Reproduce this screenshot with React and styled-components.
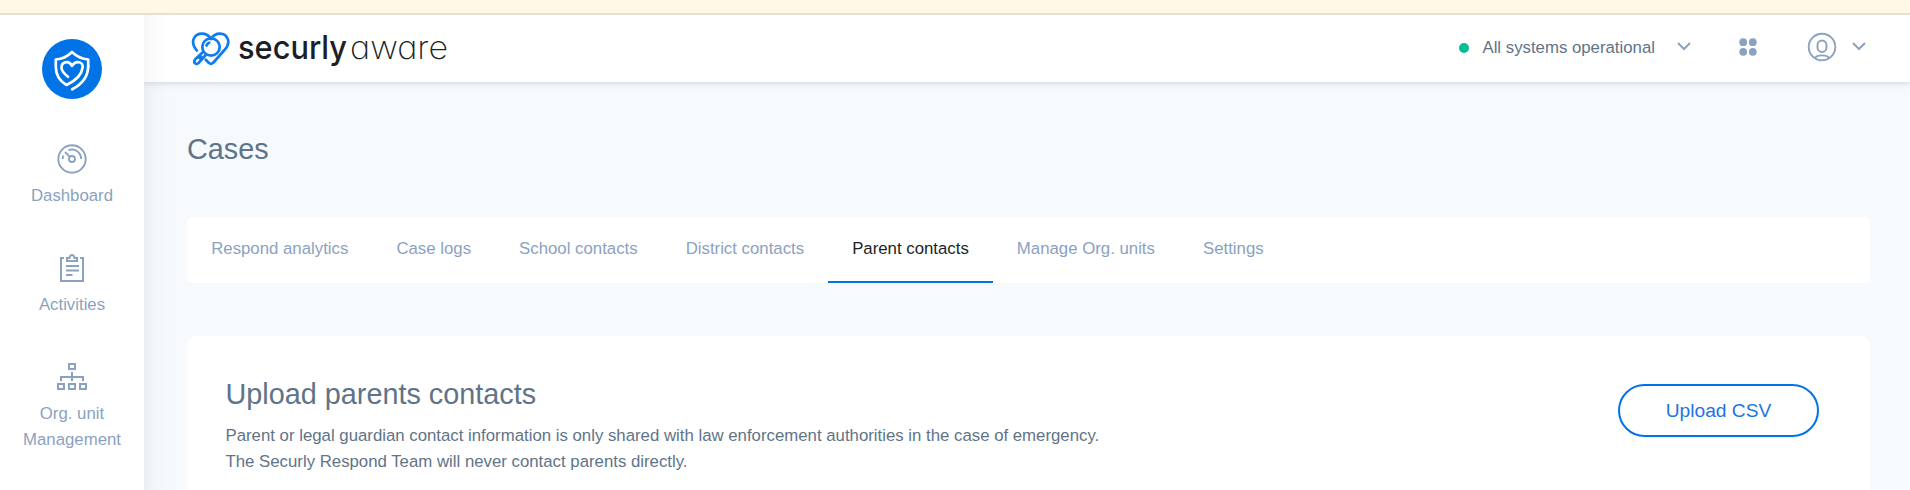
import React from "react";
import styled, { createGlobalStyle } from "styled-components";

const Global = createGlobalStyle`
  * { box-sizing: border-box; }
  html, body { margin: 0; height: 490px; overflow: hidden; }
  body { font-family: "Liberation Sans", Arial, sans-serif; font-size: 16.8px; color: #5f7488; background: #f6fafd; }
`;

const Page = styled.div`
  height: 490px;
  display: flex;
  flex-direction: column;
  overflow: hidden;
`;
const Notice = styled.div`
  flex: none;
  height: 15px;
  background: #fff7e8;
  border-bottom: 2px solid #e5e1cb;
`;
const Shell = styled.div`
  flex: 1;
  min-height: 0;
  display: flex;
`;
const Sidebar = styled.nav`
  flex: none;
  width: 144px;
  background: #fff;
  display: flex;
  flex-direction: column;
  align-items: center;
  padding-top: 24px;
`;
const Brand = styled.div`
  width: 60px;
  height: 60px;
  margin-bottom: 45px;
  border-radius: 50%;
  background: #0073e7;
`;
const NavItem = styled.a`
  height: 109px;
  display: flex;
  flex-direction: column;
  align-items: center;
  text-align: center;
  line-height: 26px;
  color: #8ba2bf;
  svg { display: block; margin-bottom: 9px; }
`;
const Main = styled.div`
  flex: 1;
  min-width: 0;
  display: flex;
  flex-direction: column;
  overflow: hidden;
  background: linear-gradient(to right, #ebeff3, #f3f7fa 12px, #f6fafd 28px);
`;
const TopBar = styled.header`
  flex: none;
  height: 67px;
  display: flex;
  align-items: center;
  padding: 0 44px 0 47px;
  background: linear-gradient(to right, #f6f6f7, #fcfcfc 12px, #fff 28px);
  box-shadow: 0 1px 6px rgba(60, 75, 105, 0.22);
  svg { display: block; }
`;
const Logo = styled.div`
  margin-right: auto;
`;
const Tools = styled.div`
  display: flex;
  align-items: center;
  height: 30px;
  margin-bottom: 4px;
`;
const Status = styled.div`
  display: flex;
  align-items: center;
  margin-right: 48px;
`;
const StatusDot = styled.span`
  width: 10px;
  height: 10px;
  margin: 2px 13px 0 0;
  border-radius: 50%;
  background: #00bf93;
`;
const StatusText = styled.span`
  line-height: 20px;
  margin: 2px 22px 0 0;
`;
const AppsButton = styled.div`
  margin-right: 50px;
`;
const Account = styled.div`
  display: flex;
  align-items: center;
  gap: 15px;
`;
const Content = styled.main`
  padding: 49px 40px 0 43px;
`;
const PageTitle = styled.h1`
  margin: 0 0 50px;
  font-size: 28.8px;
  font-weight: 400;
  line-height: 36px;
`;
const Tabs = styled.div`
  display: flex;
  height: 66px;
  background: #fff;
  border-radius: 5px;
`;
const Tab = styled.a`
  padding: 22px 23.900px 0 24.200px;
  line-height: 20px;
  white-space: nowrap;
  color: ${(p) => (p.$active ? "#1b1f25" : "#8ba2bf")};
  border-bottom: 2px solid ${(p) => (p.$active ? "#0073e7" : "transparent")};
`;
const Card = styled.section`
  display: flex;
  justify-content: space-between;
  align-items: flex-start;
  height: 220px;
  margin-top: 53px;
  padding: 38px 51px 0 38.500px;
  background: #fff;
  border-radius: 10px;
`;
const CardTitle = styled.h2`
  margin: 0 0 9px;
  font-size: 28.8px;
  font-weight: 400;
  line-height: 40px;
`;
const CardText = styled.p`
  margin: 0;
  line-height: 26px;
`;
const OutlineButton = styled.button`
  width: 201px;
  height: 53px;
  margin-top: 10px;
  padding: 0;
  border: 2px solid #0073e7;
  border-radius: 27px;
  background: #fff;
  color: #1b74e4;
  font-family: inherit;
  font-size: 19.2px;
`;

const BrandIcon = () => (
  <svg width="60" height="60" viewBox="0 0 60 60" fill="none" stroke="#fff" strokeWidth="2.7" strokeLinecap="round" strokeLinejoin="round">
    <path d="M46.200 28v-7.500c-6-.5-11-2.500-16.200-7.500-5 5-10 7-16.200 7.500v7.500c0 8 4 14 10.700 18 7.500-3.500 15-9.500 16-17 1.500-6-6.500-8.500-10.500-2.200-3.500-6.300-11-3.500-10.500 2.200.3 3.500 3 6 6.500 8.700" />
    <path d="M46.200 27c0 10-5 17.500-16 23.300" />
  </svg>
);
const DashboardIcon = () => (
  <svg width="30" height="30" viewBox="0 0 30 30" fill="none" stroke="#8ba2bf" strokeWidth="1.900">
    <circle cx="15" cy="15" r="13.700" />
    <circle cx="15" cy="15" r="3" />
    <path d="M12.800 12.800 8 8M11.500 6.200c6.500-2.300 12.500 2 12.700 8.800M5.700 15c0-1.300.2-2.300.7-3.400" />
  </svg>
);
const ActivitiesIcon = () => (
  <svg width="30" height="30" viewBox="0 0 30 30" fill="none" stroke="#8ba2bf" strokeWidth="2">
    <path d="M7 5H4v23h22V5h-3M10 8V5h2.500C13 1 17 1 17.500 5H20v3zM9 13h13M9 17.500h13M9 22h6.500" />
  </svg>
);
const OrgIcon = () => (
  <svg width="30" height="30" viewBox="0 0 30 30" fill="none" stroke="#8ba2bf" strokeWidth="2">
    <path d="M12 2h6v5h-6zM15 10v9M4 19v-4h22v4M1 22h6v5H1zM12 22h6v5h-6zM23 22h6v5h-6z" />
  </svg>
);
const Chevron = () => (
  <svg width="14" height="9" viewBox="0 0 14 9" fill="none" stroke="#8ba2bf" strokeWidth="2">
    <path d="m1 1 6 6 6-6" />
  </svg>
);
const AppsIcon = () => (
  <svg width="18" height="18" viewBox="0 0 18 18" fill="#8ba2bf">
    <circle cx="4.200" cy="4.200" r="3.900" />
    <circle cx="13.800" cy="4.200" r="3.900" />
    <circle cx="4.200" cy="13.800" r="3.900" />
    <circle cx="13.800" cy="13.800" r="3.900" />
  </svg>
);
const UserIcon = () => (
  <svg width="30" height="30" viewBox="0 0 30 30" fill="none" stroke="#8ba2bf" strokeWidth="1.900">
    <circle cx="15" cy="15" r="13.300" />
    <rect x="10.500" y="8.500" width="9" height="11.500" rx="4.500" />
    <path d="M8 26c2-3.500 12-3.500 14 0" />
  </svg>
);
const LogoArt = () => (
  <svg width="262" height="60" viewBox="0 -8 262 60">
    <g fill="none" stroke="#0d7cf0" strokeWidth="2.700" strokeLinecap="round" strokeLinejoin="round">
      <path d="M5.800 23.500C-2 14 4 6.700 11 6.700c4 0 7 2 9 5.300 2-3.300 5-5.300 9-5.300 7 0 12 8.300 4.500 16.300L22 36q-2 1.500-4 0l-3.200-3.200" />
      <circle cx="20" cy="20" r="8.700" />
      <path d="m11.500 25.500-7.500 7c-2 3.500 1 5.500 3.500 3.500l6.800-7.500M8.500 31l1.500-1.500M15.500 18.500q.8-2.200 2.700-2.800" />
    </g>
    <text x="47" y="31.500" fontFamily="Inter, sans-serif" fontSize="33" fontWeight="500" fill="#1b1f27" textLength="109" lengthAdjust="spacingAndGlyphs">securly</text>
    <text x="159" y="31.500" fontFamily="Inter, sans-serif" fontSize="33" fontWeight="200" fill="#1b1f27" textLength="98" lengthAdjust="spacingAndGlyphs" style={{ fontFeatureSettings: '"cv11"' }}>aware</text>
  </svg>
);

const tabs = ["Respond analytics", "Case logs", "School contacts", "District contacts", "Parent contacts", "Manage Org. units", "Settings"];

export default function App() {
  return (
    <Page>
      <Global />
      <Notice />
      <Shell>
        <Sidebar>
          <Brand><BrandIcon /></Brand>
          <NavItem><DashboardIcon />Dashboard</NavItem>
          <NavItem><ActivitiesIcon />Activities</NavItem>
          <NavItem><OrgIcon />Org. unit<br />Management</NavItem>
        </Sidebar>
        <Main>
          <TopBar>
            <Logo><LogoArt /></Logo>
            <Tools>
              <Status>
                <StatusDot />
                <StatusText>All systems operational</StatusText>
                <Chevron />
              </Status>
              <AppsButton><AppsIcon /></AppsButton>
              <Account><UserIcon /><Chevron /></Account>
            </Tools>
          </TopBar>
          <Content>
            <PageTitle>Cases</PageTitle>
            <Tabs>
              {tabs.map((t) => <Tab key={t} $active={t === "Parent contacts"}>{t}</Tab>)}
            </Tabs>
            <Card>
              <div>
                <CardTitle>Upload parents contacts</CardTitle>
                <CardText>
                  Parent or legal guardian contact information is only shared with law enforcement authorities in the case of emergency.
                  <br />
                  The Securly Respond Team will never contact parents directly.
                </CardText>
              </div>
              <OutlineButton>Upload CSV</OutlineButton>
            </Card>
          </Content>
        </Main>
      </Shell>
    </Page>
  );
}
